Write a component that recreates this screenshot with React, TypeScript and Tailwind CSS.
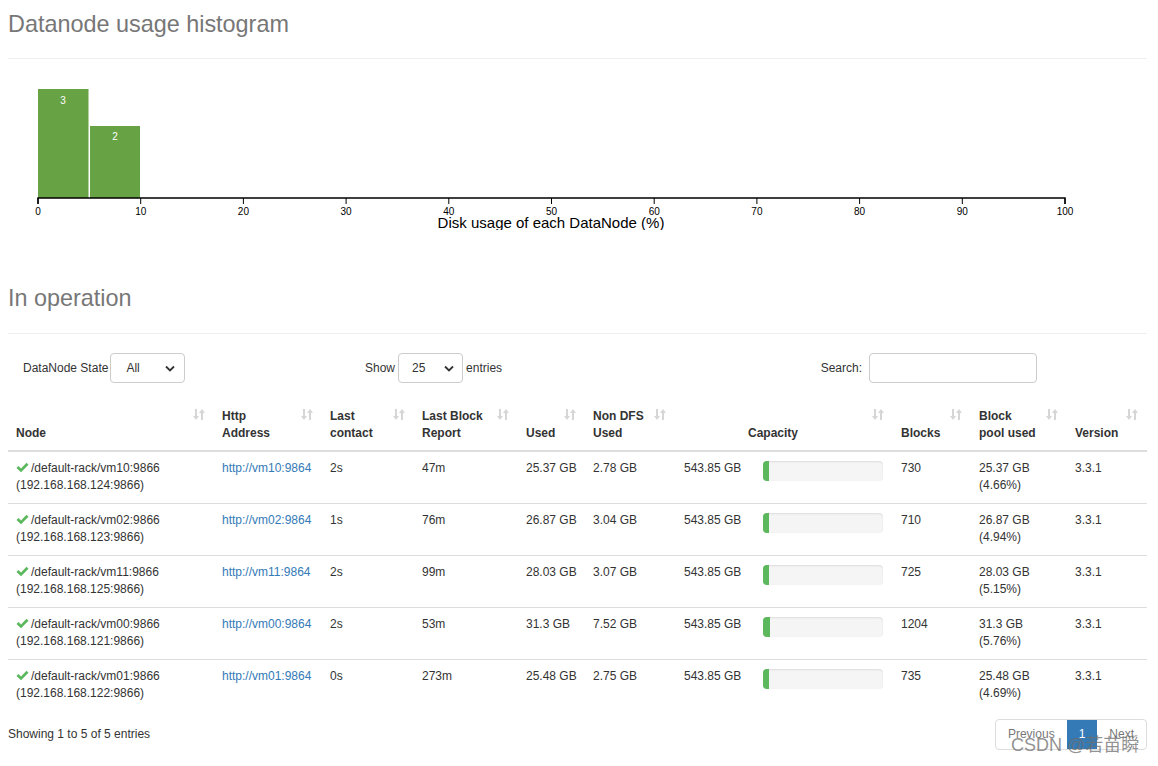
import React from "react";

type Node = {
  name: string;
  ip: string;
  http: string;
  contact: string;
  report: string;
  used: string;
  nonDfs: string;
  capacity: string;
  pct: number;
  blocks: string;
  pool: string;
  poolPct: string;
};

const nodes: Node[] = [
  { name: "/default-rack/vm10:9866", ip: "(192.168.168.124:9866)", http: "http://vm10:9864", contact: "2s", report: "47m", used: "25.37 GB", nonDfs: "2.78 GB", capacity: "543.85 GB", pct: 4.66, blocks: "730", pool: "25.37 GB", poolPct: "(4.66%)" },
  { name: "/default-rack/vm02:9866", ip: "(192.168.168.123:9866)", http: "http://vm02:9864", contact: "1s", report: "76m", used: "26.87 GB", nonDfs: "3.04 GB", capacity: "543.85 GB", pct: 4.94, blocks: "710", pool: "26.87 GB", poolPct: "(4.94%)" },
  { name: "/default-rack/vm11:9866", ip: "(192.168.168.125:9866)", http: "http://vm11:9864", contact: "2s", report: "99m", used: "28.03 GB", nonDfs: "3.07 GB", capacity: "543.85 GB", pct: 5.15, blocks: "725", pool: "28.03 GB", poolPct: "(5.15%)" },
  { name: "/default-rack/vm00:9866", ip: "(192.168.168.121:9866)", http: "http://vm00:9864", contact: "2s", report: "53m", used: "31.3 GB", nonDfs: "7.52 GB", capacity: "543.85 GB", pct: 5.76, blocks: "1204", pool: "31.3 GB", poolPct: "(5.76%)" },
  { name: "/default-rack/vm01:9866", ip: "(192.168.168.122:9866)", http: "http://vm01:9864", contact: "0s", report: "273m", used: "25.48 GB", nonDfs: "2.75 GB", capacity: "543.85 GB", pct: 4.69, blocks: "735", pool: "25.48 GB", poolPct: "(4.69%)" },
];

function SortIcon() {
  return (
    <svg width="12" height="13" viewBox="0 0 12 13" className="absolute right-[9px] top-[8px]">
      <g fill="#d6d6d6">
        <rect x="2" y="1" width="2" height="8" />
        <path d="M0 8 L6 8 L3 12 Z" />
        <rect x="8" y="4" width="2" height="8" />
        <path d="M6 5 L12 5 L9 1 Z" />
      </g>
    </svg>
  );
}

function Chevron() {
  return (
    <svg width="10" height="7" viewBox="0 0 10 7">
      <path d="M1 1.5 L5 5.5 L9 1.5" fill="none" stroke="#333" strokeWidth="1.8" />
    </svg>
  );
}

function Check() {
  return (
    <svg width="13" height="11" viewBox="0 0 13 11" className="inline-block mr-[2px] -mt-[3px] align-middle">
      <path d="M0.5 6 L2.5 4 L5 6.5 L10.5 0.8 L12.5 2.8 L5 10.3 Z" fill="#5cb85c" />
    </svg>
  );
}

function Histogram() {
  const x0 = 30;
  const span = 1027;
  const ticks = [0, 10, 20, 30, 40, 50, 60, 70, 80, 90, 100];
  return (
    <svg width="1120" height="171" className="block">
      <rect x={x0} y={30} width={50.5} height={109} fill="#67a244" />
      <rect x={x0 + 52} y={67} width={50} height={72} fill="#67a244" />
      <text x={x0 + 25} y={45} fill="#fff" fontSize="10" textAnchor="middle" fontFamily="Liberation Sans, Arial, sans-serif">3</text>
      <text x={x0 + 77} y={81} fill="#fff" fontSize="10" textAnchor="middle" fontFamily="Liberation Sans, Arial, sans-serif">2</text>
      <path d={`M${x0},145V139H${x0 + span}V145`} fill="none" stroke="#000" strokeWidth="1.5" />
      {ticks.map((t) => {
        const x = x0 + (t / 100) * span;
        return (
          <g key={t}>
            <line x1={x} x2={x} y1={139} y2={145} stroke="#000" />
            <text x={x} y={156} fontSize="10" textAnchor="middle" fill="#000" fontFamily="Liberation Sans, Arial, sans-serif">{t}</text>
          </g>
        );
      })}
      <text x={543} y={169} fontSize="15" textAnchor="middle" fill="#000" fontFamily="Liberation Sans, Arial, sans-serif">
        Disk usage of each DataNode (%)
      </text>
    </svg>
  );
}

const headers: { label: React.ReactNode; w: string; center?: boolean }[] = [
  { label: "Node", w: "w-[206px]" },
  { label: <>Http<br />Address</>, w: "w-[108px]" },
  { label: <>Last<br />contact</>, w: "w-[92px]" },
  { label: <>Last Block<br />Report</>, w: "w-[104px]" },
  { label: "Used", w: "w-[67px]" },
  { label: <>Non DFS<br />Used</>, w: "w-[90px]" },
  { label: "Capacity", w: "w-[218px]", center: true },
  { label: "Blocks", w: "w-[78px]" },
  { label: <>Block<br />pool used</>, w: "w-[96px]" },
  { label: "Version", w: "w-[80px]" },
];

export default function App() {
  return (
    <div className="relative w-[1158px] h-[766px] overflow-hidden bg-white pl-[8px] pr-[11px] font-['Liberation_Sans',Arial,sans-serif] text-[12px] leading-[17px] text-[#333]">
      <h1 className="pt-[11px] text-[23.4px] leading-[26px] text-[#777] font-normal">Datanode usage histogram</h1>
      <div className="mt-[21px] border-t border-[#eee]" />
      <Histogram />

      <h1 className="mt-[55px] text-[23.4px] leading-[26px] text-[#777] font-normal">In operation</h1>
      <div className="mt-[22px] border-t border-[#eee]" />

      <div className="mt-[19px] flex items-center h-[30px]">
        <div className="w-[357px] flex items-center pl-[15px]">
          <span className="mr-[2px]">DataNode State</span>
          <div className="w-[75px] h-[30px] border border-[#ccc] rounded-[4px] flex items-center justify-between pl-[15px] pr-[9px]">
            <span>All</span>
            <Chevron />
          </div>
        </div>
        <div className="flex items-center">
          <span className="mr-[3px]">Show</span>
          <div className="w-[65px] h-[30px] border border-[#ccc] rounded-[4px] flex items-center justify-between pl-[13px] pr-[8px]">
            <span>25</span>
            <Chevron />
          </div>
          <span className="ml-[3px]">entries</span>
        </div>
        <div className="ml-auto mr-[110px] flex items-center">
          <span className="mr-[7px]">Search:</span>
          <div className="w-[168px] h-[30px] border border-[#ccc] rounded-[4px]" />
        </div>
      </div>

      <table className="mt-[17px] w-[1139px] table-fixed border-collapse">
        <thead>
          <tr className="border-b-2 border-[#ddd]">
            {headers.map((h, i) => (
              <th
                key={i}
                className={`relative ${h.w} pl-[8px] pr-[30px] pt-[8px] pb-[8px] align-bottom font-bold ${h.center ? "text-center" : "text-left"}`}
              >
                {h.label}
                <SortIcon />
              </th>
            ))}
          </tr>
        </thead>
        <tbody>
          {nodes.map((n) => (
            <tr key={n.name} className="border-b border-[#ddd] last:border-b-0 align-top">
              <td className="pl-[8px] pt-[8px] pb-[9px]">
                <div className="whitespace-nowrap"><Check />{n.name}</div>
                <div>{n.ip}</div>
              </td>
              <td className="pl-[8px] pt-[8px] text-[#337ab7]">{n.http}</td>
              <td className="pl-[8px] pt-[8px]">{n.contact}</td>
              <td className="pl-[8px] pt-[8px]">{n.report}</td>
              <td className="pl-[8px] pt-[8px] whitespace-nowrap">{n.used}</td>
              <td className="pl-[8px] pt-[8px]">{n.nonDfs}</td>
              <td className="pl-[9px] pr-[10px] pt-[8px]">
                <div className="flex justify-between">
                  <span>{n.capacity}</span>
                  <div className="mt-[1px] w-[120px] h-[20px] rounded-[4px] bg-[#f5f5f5] shadow-[inset_0_1px_2px_rgba(0,0,0,0.1)] overflow-hidden">
                    <div className="h-full bg-[#5cb85c]" style={{ width: `${n.pct}%` }} />
                  </div>
                </div>
              </td>
              <td className="pl-[8px] pt-[8px]">{n.blocks}</td>
              <td className="pl-[8px] pt-[8px]">
                <div>{n.pool}</div>
                <div>{n.poolPct}</div>
              </td>
              <td className="pl-[8px] pt-[8px]">3.3.1</td>
            </tr>
          ))}
        </tbody>
      </table>

      <div className="mt-[8px] flex items-center justify-between">
        <span>Showing 1 to 5 of 5 entries</span>
        <div className="flex h-[31px] border border-[#ddd] rounded-[4px] overflow-hidden">
          <span className="px-[12px] flex items-center text-[#777]">Previous</span>
          <span className="px-[12px] flex items-center bg-[#337ab7] text-white">1</span>
          <span className="px-[12px] flex items-center text-[#777]">Next</span>
        </div>
      </div>

      <span className="absolute left-[1011px] top-[734px] text-[18px] leading-[22px] text-[rgba(110,110,110,0.75)] font-['Liberation_Sans','Noto_Sans_CJK_SC',sans-serif]">
        CSDN @若苗瞬
      </span>
    </div>
  );
}
